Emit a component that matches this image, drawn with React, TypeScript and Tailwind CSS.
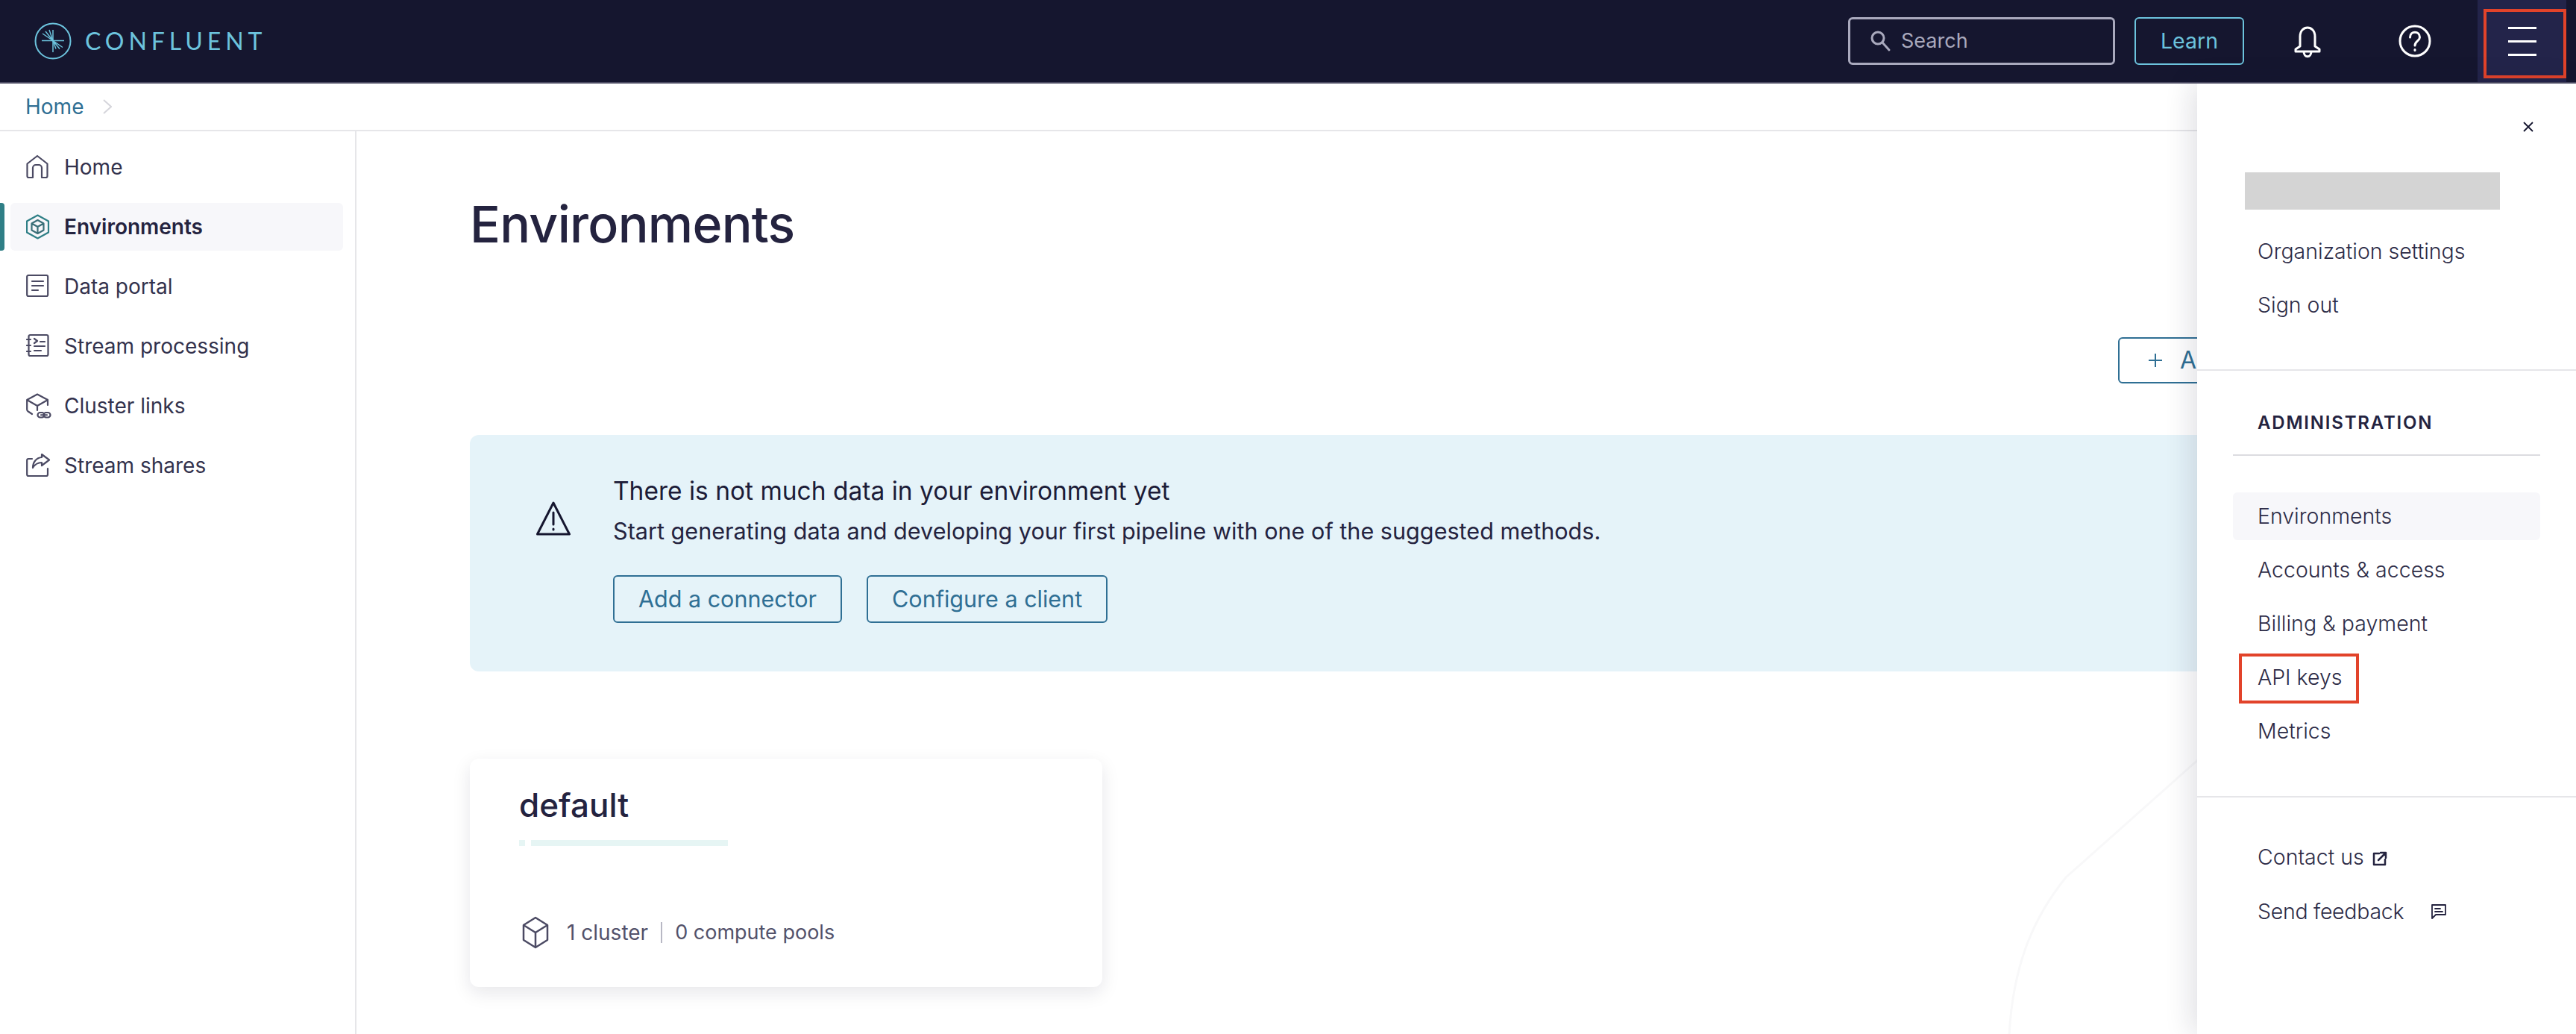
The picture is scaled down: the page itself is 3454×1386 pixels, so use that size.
const font = "font-['Inter',sans-serif]"

const navIcons = {
  home: (
    <svg viewBox="0 0 34 34" className="h-[34px] w-[34px]" fill="none" stroke="#4b4a63" strokeWidth="2.200" strokeLinejoin="round" strokeLinecap="round">
      <path d="M1.500 12.500 15 2l13.500 10.500V29a2 2 0 0 1-2 2H21V18a4 4 0 0 0-4-4h-4a4 4 0 0 0-4 4v13H3.500a2 2 0 0 1-2-2z" />
    </svg>
  ),
  env: (
    <svg viewBox="0 0 34 34" className="h-[34px] w-[34px]" fill="none" stroke="#2f7f86" strokeWidth="2.200" strokeLinejoin="round" strokeLinecap="round">
      <path d="M15.500 1.500 30 9.500v15l-14.500 8-14.500-8v-15z" />
      <path d="M15.500 8l8 4.500v9l-8 4.500-8-4.500v-9zM7.500 12.500l8 4.500 8-4.500M15.500 17v9" stroke="#3b6f78" />
    </svg>
  ),
  data: (
    <svg viewBox="0 0 34 34" className="h-[34px] w-[34px]" fill="none" stroke="#4b4a63" strokeWidth="2.200" strokeLinecap="round" strokeLinejoin="round">
      <rect x="1.200" y="2" width="28" height="28" rx="2" />
      <path d="M8 10h15M8 16h15M8 22h8" />
    </svg>
  ),
  stream: (
    <svg viewBox="0 0 34 34" className="h-[34px] w-[34px]" fill="none" stroke="#4b4a63" strokeWidth="2.200" strokeLinecap="round" strokeLinejoin="round">
      <rect x="3.500" y="2" width="26" height="28" rx="2" />
      <path d="M1 8h5M1 16h5M1 24h5M11 7l4 3-4 3M19 11h6M11 17h14M11 23h9" />
    </svg>
  ),
  links: (
    <svg viewBox="0 0 34 34" className="h-[34px] w-[34px]" fill="none" stroke="#4b4a63" strokeWidth="2.200" strokeLinecap="round" strokeLinejoin="round">
      <path d="M1.200 9 15 1.500 29 9v7M1.200 9v13a3 3 0 0 0 1.500 2.500L8 28M1.200 9 15 17l14-8M15 17v6" />
      <rect x="15.500" y="26" width="9" height="6.500" rx="3.250" />
      <rect x="23.500" y="26" width="9" height="6.500" rx="3.250" />
      <path d="M20 29.250h8" />
    </svg>
  ),
  shares: (
    <svg viewBox="0 0 34 34" className="h-[34px] w-[34px]" fill="none" stroke="#4b4a63" strokeWidth="2.200" strokeLinecap="round" strokeLinejoin="round">
      <path d="M8 8H3.200a2 2 0 0 0-2 2v19a2 2 0 0 0 2 2H27a2 2 0 0 0 2-2v-8" />
      <path d="M21 2l10 7.500L21 17v-4c-5 0-9 2-12 7 0-8 5-13.500 12-14z" />
    </svg>
  ),
}

const sidebarItems = [
  { label: "Home", icon: navIcons.home },
  { label: "Environments", icon: navIcons.env, active: true },
  { label: "Data portal", icon: navIcons.data },
  { label: "Stream processing", icon: navIcons.stream },
  { label: "Cluster links", icon: navIcons.links },
  { label: "Stream shares", icon: navIcons.shares },
]

const adminItems = ["Environments", "Accounts & access", "Billing & payment", "API keys", "Metrics"]

const Logo = () => (
  <div className="flex items-center gap-[18px]">
    <svg viewBox="0 0 50 50" className="h-[50px] w-[50px]" fill="none" stroke="#6cc3dd">
      <circle cx="25" cy="25" r="23.500" strokeWidth="2" />
      <path d="M10 24.500h30M25 10v30" strokeWidth="1.500" />
      <path d="M25 24.500 11 15M25 24.500 15 12M25 24.500 20 10M25 24.500l13 9M25 24.500l9 11M25 24.500l4 11" strokeWidth="1.500" />
    </svg>
    <span className="font-['Lato',sans-serif] text-[32px] leading-none tracking-[0.185em] text-[#6cc3dd]">CONFLUENT</span>
  </div>
)

const Header = () => (
  <header className="flex h-[112px] items-center justify-between border-b-2 border-[#4c4b63] bg-[#15162f] pl-[46px]">
    <Logo />
    <div className="flex h-full items-center pr-[13px]">
      <div className="flex h-[64px] w-[358px] items-center gap-[12px] rounded-[6px] border-[3px] border-[#a9a9bd] pl-[24px] text-[27px] text-[#a9a9bd]">
        <svg viewBox="0 0 32 32" className="h-[32px] w-[32px]" fill="none" stroke="#a9a9bd" strokeWidth="3" strokeLinecap="round">
          <circle cx="13" cy="12" r="8" />
          <path d="m19 18 9 10" />
        </svg>
        Search
      </div>
      <div className="ml-[26px] flex h-[64px] w-[147px] items-center justify-center rounded-[6px] border-2 border-[#6cc3dd] text-[28.500px] text-[#6cc3dd]">Learn</div>
      <div className="ml-[41px] flex w-[88px] justify-center">
        <svg viewBox="0 0 46 46" className="h-[46px] w-[46px]" fill="none" stroke="#fff" strokeWidth="3" strokeLinejoin="round">
          <path d="M13 17c0-16 20-16 20 0v13l6 4v3H7v-3l6-4z" />
          <path d="M18 37c0 9 10 9 10 0" />
        </svg>
      </div>
      <div className="ml-[56px] flex w-[88px] justify-center">
        <svg viewBox="0 0 44 44" className="h-[44px] w-[44px]" fill="none" stroke="#fff" strokeWidth="3" strokeLinecap="round">
          <circle cx="22" cy="22" r="20" />
          <path d="M15.500 17c0-9 13-9 13 0 0 5-6.500 5-6.500 11" />
          <path d="M22 33.500v1" strokeWidth="3" />
        </svg>
      </div>
      <div className="relative ml-[40px] flex h-full w-[119px] items-center justify-center bg-[#23244a]">
        <div className="flex flex-col gap-[15px]">
          <div className="h-[3px] w-[38px] bg-white" />
          <div className="h-[3px] w-[38px] bg-white" />
          <div className="h-[3px] w-[38px] bg-white" />
        </div>
        <div className="absolute top-[12px] right-0 bottom-[5px] left-[8px] border-[4px] border-[#e2432a]" />
      </div>
    </div>
  </header>
)

const Sidebar = () => (
  <aside className="flex w-[478px] shrink-0 flex-col gap-[16px] border-r-2 border-[#e6e6e9] pt-[16px] pr-[16px]">
    {sidebarItems.map((item) => (
      <div key={item.label} className="flex h-[64px] items-stretch">
        <div className={item.active ? "w-[6px] rounded-r-[4px] bg-[#2f7f86]" : "w-[6px]"} />
        <div className={`ml-[8px] flex flex-1 items-center gap-[17px] rounded-[6px] pl-[21px] ${item.active ? "bg-[#f7f7fa]" : ""}`}>
          {item.icon}
          <span className={`text-[28px] ${item.active ? "font-semibold text-[#24233f]" : "text-[#33324d]"}`}>{item.label}</span>
        </div>
      </div>
    ))}
  </aside>
)

const Banner = () => (
  <div className="mt-[69px] flex h-[317px] items-start rounded-[12px] bg-[#e5f3f9] pl-[89px]">
    <svg viewBox="0 0 46 46" className="mt-[89px] h-[46px] w-[46px] shrink-0" fill="none" stroke="#15162f" strokeWidth="3" strokeLinejoin="round" strokeLinecap="round">
      <path d="M23 2 44.500 44h-43z" />
      <path d="M23 15v16M23 37v1" />
    </svg>
    <div className="ml-[57px] pt-[49px]">
      <p className="text-[33.500px] leading-[53px] text-[#1c1c38]">There is not much data in your environment yet</p>
      <p className="text-[30.600px] leading-[53px] text-[#24233f]">Start generating data and developing your first pipeline with one of the suggested methods.</p>
      <div className="mt-[33px] flex gap-[33px]">
        <div className="flex h-[64px] items-center rounded-[6px] border-2 border-[#2f6f94] px-[32px] text-[30.500px] text-[#2f6f94]">Add a connector</div>
        <div className="flex h-[64px] items-center rounded-[6px] border-2 border-[#2f6f94] px-[32px] text-[30.500px] text-[#2f6f94]">Configure a client</div>
      </div>
    </div>
  </div>
)

const Card = () => (
  <div className="mt-[117px] h-[306px] w-[848px] rounded-[12px] bg-white px-[66px] pt-[30px] shadow-[0_8px_24px_rgba(21,22,47,0.1)]">
    <div className="text-[44px] leading-[64px] font-medium text-[#24233f]">default</div>
    <div className="mt-[15px] flex gap-[8px]">
      <div className="h-[8px] w-[8px] bg-[#e6f5f4]" />
      <div className="h-[8px] w-[264px] bg-[#e6f5f4]" />
    </div>
    <div className="mt-[94px] flex items-center">
      <svg viewBox="0 0 40 44" className="ml-[2px] h-[44px] w-[40px]" fill="none" stroke="#4b4a63" strokeWidth="2.500" strokeLinejoin="round">
        <path d="M20 2 36 12v20L20 42 4 32V12zM4 12l16 10 16-10M20 22v20" />
      </svg>
      <span className="ml-[22px] text-[28px] text-[#53526b]">1 cluster</span>
      <div className="mx-[17px] h-[28px] w-[2px] bg-[#b8b8c4]" />
      <span className="text-[27px] text-[#53526b]">0 compute pools</span>
    </div>
  </div>
)

const PanelLink = ({ children, className = "" }: { children: React.ReactNode; className?: string }) => (
  <div className={`flex h-[64px] items-center rounded-[6px] pl-[33px] text-[28.500px] font-light text-[#2d2c47] ${className}`}>{children}</div>
)

const AccountPanel = () => (
  <div className="absolute top-[112px] right-0 bottom-0 w-[508px] bg-white shadow-[-6px_0_36px_rgba(21,22,47,0.14)]">
    <div className="flex justify-end pt-[51px] pr-[57px]">
      <svg viewBox="0 0 14 14" className="h-[14px] w-[14px]" fill="none" stroke="#15162f" strokeWidth="1.800" aria-label="Close">
        <path d="m1 1 12 12M13 1 1 13" />
      </svg>
    </div>
    <div className="mt-[54px] ml-[64px] h-[50px] w-[342px] bg-[#d4d4d4]" />
    <div className="mt-[24px] flex flex-col gap-[8px] px-[48px] pb-[54px]">
      <PanelLink>Organization settings</PanelLink>
      <PanelLink>Sign out</PanelLink>
    </div>
    <div className="border-t-2 border-[#e6e6e9] px-[48px] pt-[54px] pb-[55px]">
      <div className="border-b-2 border-[#dcdce0] pb-[26px] pl-[33px] text-[24px] leading-[32px] font-semibold tracking-[0.075em] text-[#24233f]">ADMINISTRATION</div>
      <div className="mt-[49px] flex flex-col gap-[8px]">
        {adminItems.map((item) => (
          <div key={item} className="relative">
            <PanelLink className={item === "Environments" ? "bg-[#f7f7fa]" : ""}>{item}</PanelLink>
            {item === "API keys" && <div className="absolute top-0 left-[8px] h-[67px] w-[161px] border-[4px] border-[#e2432a]" />}
          </div>
        ))}
      </div>
    </div>
    <div className="flex flex-col gap-[9px] border-t-2 border-[#e6e6e9] px-[48px] pt-[48px]">
      <PanelLink>
        Contact us
        <svg viewBox="0 0 20 20" className="mt-[4px] ml-[11px] h-[20px] w-[20px]" fill="none" stroke="#24233f" strokeWidth="2.500" strokeLinecap="round" strokeLinejoin="round">
          <path d="M9 3H2v15h15v-7M18 2 8 12M11 2h7v7" />
        </svg>
      </PanelLink>
      <PanelLink className="tracking-[-0.01em]">
        Send feedback
        <svg viewBox="0 0 20 20" className="ml-[37px] h-[20px] w-[20px]" fill="none" stroke="#24233f" strokeWidth="1.800" strokeLinejoin="round" strokeLinecap="round">
          <path d="M1 1h18v13H6l-5 5zM5 6h7M5 10h10" />
        </svg>
      </PanelLink>
    </div>
  </div>
)

export default function App() {
  return (
    <div className={`relative flex h-[1386px] w-[3454px] flex-col overflow-hidden bg-white ${font}`}>
      <Header />
      <div className="flex h-[64px] items-center gap-[26px] border-b-2 border-[#e6e6e9] pl-[34px]">
        <span className="text-[28px] text-[#2f6f94]">Home</span>
        <svg viewBox="0 0 12 20" className="h-[20px] w-[12px]" fill="none" stroke="#d5d5db" strokeWidth="2">
          <path d="m1 1 10 9-10 9" />
        </svg>
      </div>
      <div className="flex flex-1 overflow-hidden">
        <Sidebar />
        <main className="relative flex-1 pt-[80px] pr-[140px] pl-[152px]">
          {/* faint watermark behind the panel */}
          <svg viewBox="0 0 400 400" className="absolute right-[420px] bottom-0 h-[400px] w-[400px]" fill="none" stroke="#f8f8f9" strokeWidth="3">
            <path d="M34 400C40 300 70 240 110 190L290 30" />
            <path d="M300 400c-10-60 10-120 60-170" />
          </svg>
          <h1 className="text-[68px] leading-[88px] font-medium tracking-[-0.011em] text-[#24233f]">Environments</h1>
          <div className="mt-[108px] ml-[2210px] flex h-[62px] w-[500px] items-center gap-[24px] rounded-[6px] border-2 border-[#2f6f94] pl-[39px] text-[32px] text-[#2f6f94]">
            <svg viewBox="0 0 18 18" className="h-[18px] w-[18px]" fill="none" stroke="#2f6f94" strokeWidth="2">
              <path d="M9 0v18M0 9h18" />
            </svg>
            Add cloud environment
          </div>
          <Banner />
          <Card />
        </main>
      </div>
      <AccountPanel />
    </div>
  )
}
